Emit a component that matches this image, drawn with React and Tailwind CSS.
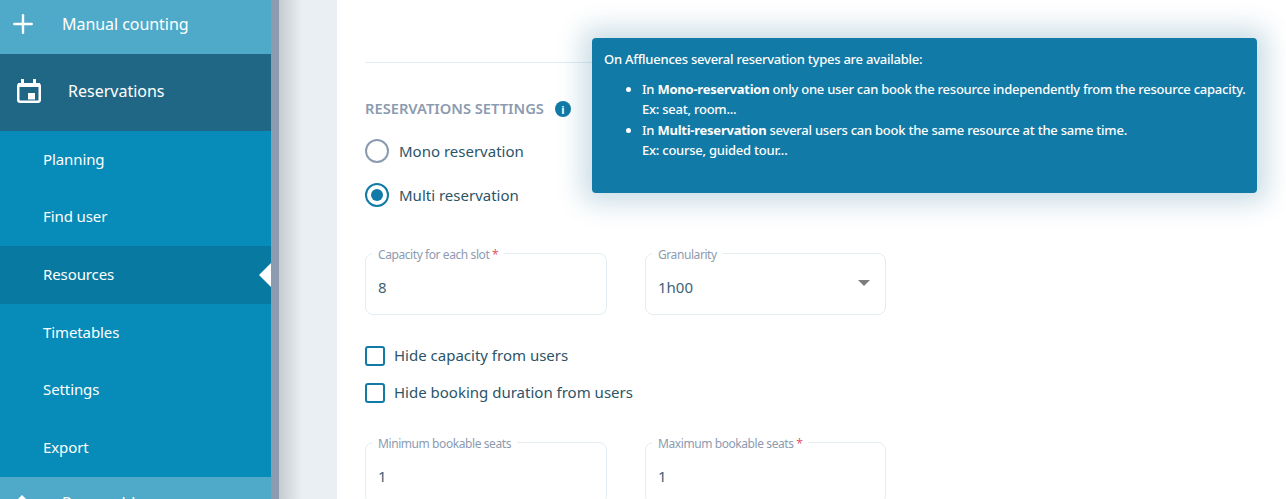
import React from 'react';
import { Plus } from 'lucide-react';

const font = "font-['Noto_Sans','Open_Sans',sans-serif]";

function Field({ label, required, value, width = 'w-[242px]', children }) {
  return (
    <div className={`relative h-[62px] ${width} rounded-lg border border-[#e3edf2] px-3 pt-[21px] text-[15px] leading-6 text-[#3d6475]`}>
      <span className="absolute -top-[7px] left-[6px] bg-white px-[6px] text-[12px] leading-4 tracking-[-0.42px] text-[#8c9bb0]">
        {label}
        {required && <span className="text-[#e5566d]"> *</span>}
      </span>
      {value}
      {children}
    </div>
  );
}

function Check({ label }) {
  return (
    <div className="flex h-[20px] items-center gap-[9px]">
      <span className="h-[20px] w-[20px] rounded-[3px] border-2 border-[#127aa6]"></span>
      <span className="pb-[2px] text-[15px] text-[#2b5468]">{label}</span>
    </div>
  );
}

function SubItem({ label, active }) {
  return (
    <div className={`relative flex h-[57.7px] shrink-0 items-center pb-[2px] pl-[43px] text-[15px] tracking-[-0.1px] text-white ${active ? 'bg-[#087aa2]' : ''}`}>
      {label}
      {active && (
        <span className="absolute right-0 top-1/2 h-0 w-0 -translate-y-1/2 border-y-[12px] border-r-[12px] border-y-transparent border-r-white"></span>
      )}
    </div>
  );
}

export default function App() {
  return (
    <div className={`flex h-[499px] w-[1286px] overflow-hidden bg-[#e9eff3] ${font}`}>
      <aside className="flex w-[271px] shrink-0 flex-col overflow-hidden bg-[#078bb8]">
        <div className="flex h-[54px] shrink-0 items-center bg-[#4eaac8] pb-[6px] text-[16px] tracking-[-0.05px] text-white">
          <Plus size={30} strokeWidth={1.9} className="ml-[8px]" />
          <span className="ml-[24px]">Manual counting</span>
        </div>
        <div className="flex h-[77px] shrink-0 items-center bg-[#1f6785] pb-[3px] text-[16px] text-white">
          <svg width="24" height="24" viewBox="0 0 24 24" className="ml-[17px]" fill="none">
            <path d="M5.5 0v5M17.5 0v5" stroke="#fff" strokeWidth="3" />
            <rect x="1.25" y="5.25" width="21.5" height="17.5" rx="2" stroke="#fff" strokeWidth="2.5" />
            <rect x="1" y="4" width="22" height="4" fill="#fff" />
            <rect x="11" y="14" width="7" height="6.5" fill="#fff" />
          </svg>
          <span className="ml-[27px]">Reservations</span>
        </div>
        <SubItem label="Planning" />
        <SubItem label="Find user" />
        <SubItem label="Resources" active />
        <SubItem label="Timetables" />
        <SubItem label="Settings" />
        <SubItem label="Export" />
        <div className="flex h-[54px] shrink-0 items-start bg-[#4eaac8] pt-[14px] text-[16px] text-white">
          <svg width="24" height="24" viewBox="0 0 24 24" className="ml-[10px] mt-[4px]" fill="#fff">
            <path d="M12 0 24 12v12H0V12z" />
          </svg>
          <span className="ml-[28px]">Reservable</span>
        </div>
      </aside>

      <div className="w-[8px] shrink-0 bg-[#8c9bb0]"></div>
      <div className="w-[58px] shrink-0 bg-gradient-to-r from-[#c5cbcf] via-[#e9eff3] via-40% to-[#e9eff3]"></div>

      <main className="relative flex-1 bg-white pl-[28px]">
        <div className="mt-[62px] mr-[29px] border-t border-[#e3edf2]"></div>

        <div className="mt-[35px] flex items-center gap-[11px]">
          <span className="text-[14.7px] leading-5 font-semibold text-[#8c9bb0]">RESERVATIONS SETTINGS</span>
          <span className="mt-[2px] flex h-4 w-4 items-center justify-center rounded-full bg-[#127aa6] text-[11px] leading-none font-bold text-white">i</span>
        </div>

        <div className="mt-[21px] flex h-[24px] items-center gap-[10px]">
          <span className="h-[24px] w-[24px] rounded-full border-2 border-[#8c9bb0]"></span>
          <span className="text-[15px] text-[#2b5468]">Mono reservation</span>
        </div>
        <div className="mt-[20px] flex h-[24px] items-center gap-[10px]">
          <span className="flex h-[24px] w-[24px] items-center justify-center rounded-full border-2 border-[#127aa6]">
            <span className="h-[12px] w-[12px] rounded-full bg-[#127aa6]"></span>
          </span>
          <span className="text-[15px] text-[#2b5468]">Multi reservation</span>
        </div>

        <div className="mt-[46px] flex gap-[38px]">
          <Field label="Capacity for each slot" required value="8" />
          <Field label="Granularity" value="1h00" width="w-[241px]">
            <span className="absolute right-[15px] top-[26px] h-0 w-0 border-x-[6px] border-t-[6px] border-x-transparent border-t-[#7d7d7d]"></span>
          </Field>
        </div>

        <div className="mt-[31px] flex flex-col gap-[17px]">
          <Check label="Hide capacity from users" />
          <Check label="Hide booking duration from users" />
        </div>

        <div className="mt-[39px] flex gap-[38px]">
          <Field label="Minimum bookable seats" value="1" />
          <Field label="Maximum bookable seats" required value="1" width="w-[241px]" />
        </div>

        <div className="absolute left-[255px] top-[38px] h-[155px] w-[665px] rounded-[4px] bg-[#117aa6] pl-3 pr-[6px] pt-[11px] text-[13px] leading-[20.5px] font-medium tracking-[-0.24px] text-white shadow-[0_0_26px_10px_rgba(17,100,140,0.22)]">
          <p>On Affluences several reservation types are available:</p>
          <ul className="mt-[9px] list-disc pl-[38px]">
            <li>
              In <b>Mono-reservation</b> only one user can book the resource independently from the resource capacity.
              <br />
              Ex: seat, room...
            </li>
            <li>
              In <b>Multi-reservation</b> several users can book the same resource at the same time.
              <br />
              Ex: course, guided tour...
            </li>
          </ul>
        </div>
      </main>
    </div>
  );
}
